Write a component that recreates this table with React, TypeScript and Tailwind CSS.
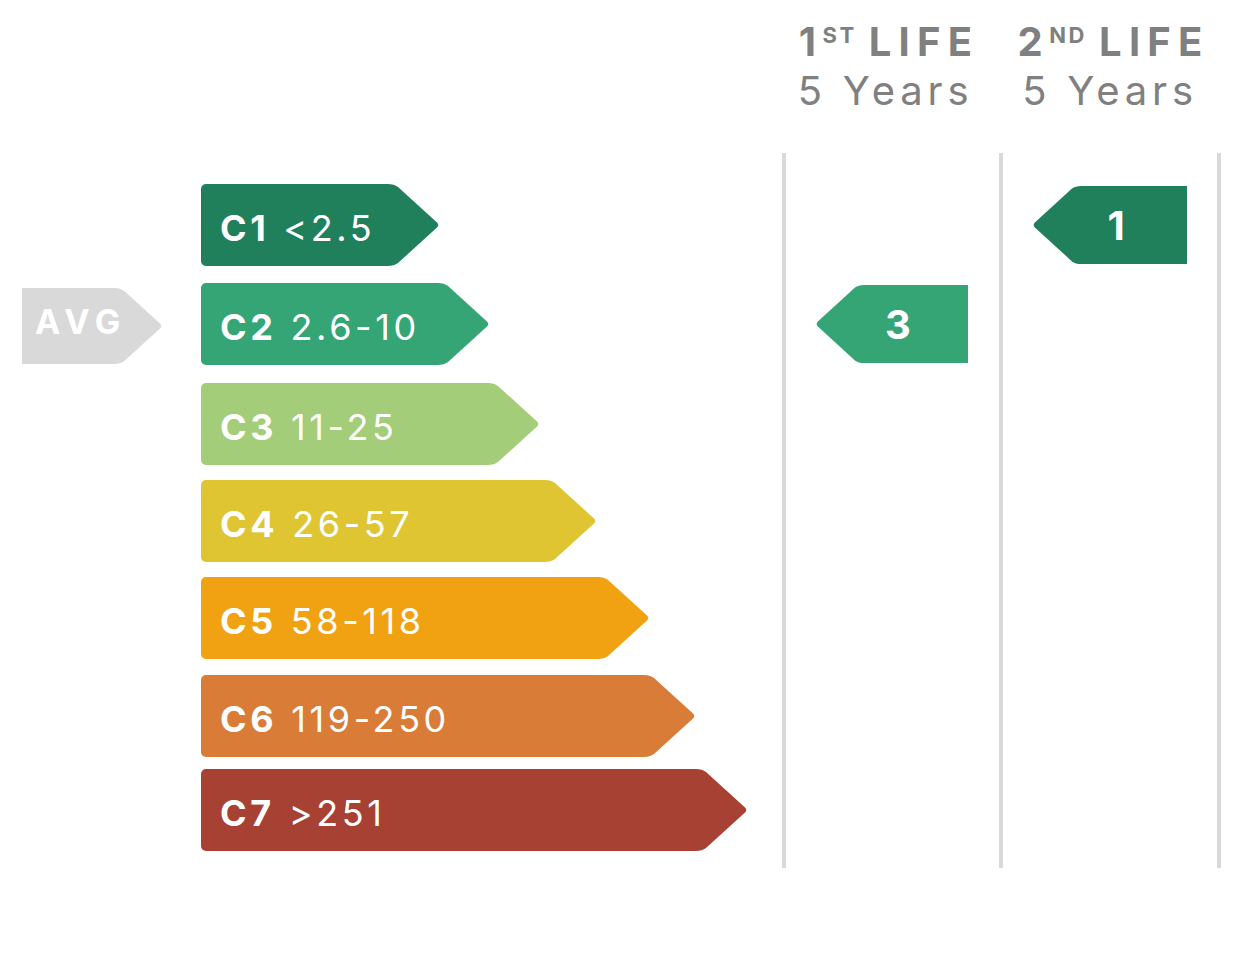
import React from 'react';

type Bar = {
  code: string;
  range: string;
  bg: string;
  fill: string;
  width: string;
  mt: string;
};

// row offsets follow the original artwork, which isn't perfectly even
const BARS: Bar[] = [
  { code: 'C1', range: '<2.5', bg: 'bg-[#21805c]', fill: 'fill-[#21805c]', width: 'w-[185px]', mt: 'mt-[31px]' },
  { code: 'C2', range: '2.6-10', bg: 'bg-[#35a575]', fill: 'fill-[#35a575]', width: 'w-[235px]', mt: 'mt-[17px]' },
  { code: 'C3', range: '11-25', bg: 'bg-[#a3cd78]', fill: 'fill-[#a3cd78]', width: 'w-[285px]', mt: 'mt-[18px]' },
  { code: 'C4', range: '26-57', bg: 'bg-[#dfc532]', fill: 'fill-[#dfc532]', width: 'w-[342px]', mt: 'mt-[15px]' },
  { code: 'C5', range: '58-118', bg: 'bg-[#f0a212]', fill: 'fill-[#f0a212]', width: 'w-[395px]', mt: 'mt-[15px]' },
  { code: 'C6', range: '119-250', bg: 'bg-[#d87c38]', fill: 'fill-[#d87c38]', width: 'w-[441px]', mt: 'mt-[16px]' },
  { code: 'C7', range: '>251', bg: 'bg-[#a64133]', fill: 'fill-[#a64133]', width: 'w-[493px]', mt: 'mt-[12px]' },
];

const TIP = 'M0 0 H3 Q9 0 13 3 L52 38.5 Q54.5 41 52 43.5 L13 79 Q9 82 3 82 H0 Z';

function Tip({ fill, w, h, flip }: { fill: string; w: number; h: number; flip?: boolean }) {
  return (
    <svg
      width={w}
      height={h}
      viewBox="0 0 55 82"
      preserveAspectRatio="none"
      className={flip ? '-mr-px shrink-0 -scale-x-100' : '-ml-px shrink-0'}
    >
      <path d={TIP} className={fill} />
    </svg>
  );
}

function Marker({ value, bg, fill, body }: { value: string; bg: string; fill: string; body: string }) {
  return (
    <div className="flex h-[78px] items-stretch">
      <Tip fill={fill} w={52} h={78} flip />
      <div className={`relative flex items-center ${bg} ${body}`}>
        <span className="absolute -left-[38px] right-0 pt-[2px] text-center text-[40px] font-bold leading-none text-white">
          {value}
        </span>
      </div>
    </div>
  );
}

function Header({ num, sup }: { num: string; sup: string }) {
  return (
    <div className="flex flex-col items-center text-[#808080]">
      <div className="flex items-start text-[40px] font-bold leading-[48px] tracking-[0.16em]">
        <span>{num}</span>
        <span className="mt-[4px] text-[22px] leading-[26px] tracking-[0.12em]">{sup}</span>
        <span className="ml-[12px] -mr-[7px] tracking-[0.18em]">LIFE</span>
      </div>
      <div className="text-[40px] leading-[50px] tracking-[0.12em]">5 Years</div>
    </div>
  );
}

const ROW = 'flex h-[82px] items-center';

export default function App() {
  return (
    <div className="h-[964px] w-[1258px] bg-white font-['Inter','Liberation_Sans',sans-serif]">
      {/* column titles */}
      <div className="flex h-[153px] pt-[18px]">
        <div className="w-[786px]" />
        <div className="w-[213px] pr-[14px]">
          <Header num="1" sup="ST" />
        </div>
        <div className="w-[4px]" />
        <div className="w-[214px]">
          <Header num="2" sup="ND" />
        </div>
      </div>

      <div className="flex h-[715px]">
        {/* scale */}
        <div className="flex w-[782px] flex-col">
          {BARS.map((b, i) => (
            <div key={b.code} className={`${ROW} ${b.mt}`}>
              <div className="flex w-[201px] pl-[22px] pt-[4px]">
                {i === 1 && (
                  <div className="flex h-[76px] items-stretch">
                    <div className="relative z-10 flex w-[91px] items-center whitespace-nowrap bg-[#d9d9d9] pb-[8px] pl-[13px] text-[34px] font-bold leading-none tracking-[0.19em] text-white">
                      AVG
                    </div>
                    <Tip fill="fill-[#d9d9d9]" w={51} h={76} />
                  </div>
                )}
              </div>
              <div className="flex h-[82px] items-stretch">
                <div
                  className={`flex items-center rounded-l-[5px] pl-[19px] pt-[6px] text-[36px] leading-none tracking-[0.1em] text-white ${b.bg} ${b.width}`}
                >
                  <span className="font-bold">{b.code}</span>
                  <span className="ml-[14px] whitespace-nowrap">{b.range}</span>
                </div>
                <Tip fill={b.fill} w={55} h={82} />
              </div>
            </div>
          ))}
        </div>

        {/* 1st life */}
        <div className="flex w-[217px] flex-col border-l-4 border-[#d9d9d9]">
          {BARS.map((b, i) => (
            <div key={b.code} className={`${ROW} ${b.mt} justify-end pr-[31px]`}>
              {i === 1 && <Marker value="3" bg="bg-[#35a575]" fill="fill-[#35a575]" body="w-[102px]" />}
            </div>
          ))}
        </div>

        {/* 2nd life */}
        <div className="flex w-[222px] flex-col border-x-4 border-[#d9d9d9]">
          {BARS.map((b, i) => (
            <div key={b.code} className={`${ROW} ${b.mt} justify-end pr-[30px]`}>
              {i === 0 && <Marker value="1" bg="bg-[#21805c]" fill="fill-[#21805c]" body="w-[104px]" />}
            </div>
          ))}
        </div>
      </div>
    </div>
  );
}
